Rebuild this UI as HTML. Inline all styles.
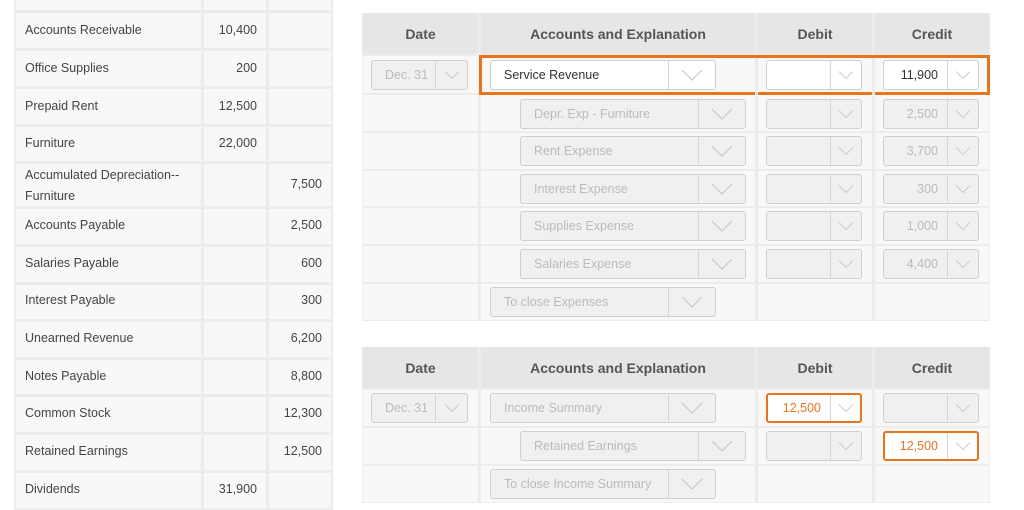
<!DOCTYPE html>
<html><head><meta charset="utf-8"><style>
*{box-sizing:border-box;margin:0;padding:0}
body{width:1024px;height:510px;background:#fff;position:relative;overflow:hidden;font-family:"Liberation Sans",sans-serif;font-size:12.5px;color:#444}
.c{position:absolute;background:#f8f8f8}
.bg{position:absolute;background:#ececec}
.h{position:absolute;background:#e6e6e6;font-size:14px;font-weight:bold;color:#555;display:flex;align-items:center;justify-content:center}
.t{position:absolute;color:#444;line-height:17px}
.n{position:absolute;text-align:right;color:#444;line-height:17px}
.s{position:absolute;height:30px;border:1px solid #cfcfcf;border-radius:3px;background:#f0f0f0;color:#bbb;font-size:12.5px}
.s .v{position:absolute;left:13px;top:7px;white-space:nowrap}
.s .r{position:absolute;right:10px;left:auto;text-align:right}
.s .a{position:absolute;right:0;top:0;bottom:0;border-left:1px solid #d6d6d6}
.s .a svg{position:absolute;left:50%;top:50%;transform:translate(-50%,-50%)}
.w{background:#fff;color:#333}
.o{border:2px solid #e8741e;color:#e8741e;background:#fff}
</style></head><body>
<!-- left table -->
<div class="bg" style="left:14px;top:0;width:319px;height:510px"></div>
<div class="c" style="left:16px;top:0;width:185px;height:10px"></div><div class="c" style="left:204px;top:0;width:62px;height:10px"></div><div class="c" style="left:269px;top:0;width:62px;height:10px"></div>

<div class="c" style="left:16px;top:13px;width:185px;height:35px"></div><div class="c" style="left:204px;top:13px;width:62px;height:35px"></div><div class="c" style="left:269px;top:13px;width:62px;height:35px"></div>
<div class="t" style="left:25px;top:22px">Accounts Receivable</div><div class="n" style="left:204px;top:22px;width:53px">10,400</div>

<div class="c" style="left:16px;top:51px;width:185px;height:35px"></div><div class="c" style="left:204px;top:51px;width:62px;height:35px"></div><div class="c" style="left:269px;top:51px;width:62px;height:35px"></div>
<div class="t" style="left:25px;top:60px">Office Supplies</div><div class="n" style="left:204px;top:60px;width:53px">200</div>

<div class="c" style="left:16px;top:89px;width:185px;height:35px"></div><div class="c" style="left:204px;top:89px;width:62px;height:35px"></div><div class="c" style="left:269px;top:89px;width:62px;height:35px"></div>
<div class="t" style="left:25px;top:98px">Prepaid Rent</div><div class="n" style="left:204px;top:98px;width:53px">12,500</div>

<div class="c" style="left:16px;top:127px;width:185px;height:34px"></div><div class="c" style="left:204px;top:127px;width:62px;height:34px"></div><div class="c" style="left:269px;top:127px;width:62px;height:34px"></div>
<div class="t" style="left:25px;top:135px">Furniture</div><div class="n" style="left:204px;top:135px;width:53px">22,000</div>

<div class="c" style="left:16px;top:164px;width:185px;height:42px"></div><div class="c" style="left:204px;top:164px;width:62px;height:42px"></div><div class="c" style="left:269px;top:164px;width:62px;height:42px"></div>
<div class="t" style="left:25px;top:165px;line-height:21px">Accumulated Depreciation--<br>Furniture</div><div class="n" style="left:269px;top:176px;width:53px">7,500</div>

<div class="c" style="left:16px;top:209px;width:185px;height:35px"></div><div class="c" style="left:204px;top:209px;width:62px;height:35px"></div><div class="c" style="left:269px;top:209px;width:62px;height:35px"></div>
<div class="t" style="left:25px;top:217px">Accounts Payable</div><div class="n" style="left:269px;top:217px;width:53px">2,500</div>

<div class="c" style="left:16px;top:247px;width:185px;height:35px"></div><div class="c" style="left:204px;top:247px;width:62px;height:35px"></div><div class="c" style="left:269px;top:247px;width:62px;height:35px"></div>
<div class="t" style="left:25px;top:255px">Salaries Payable</div><div class="n" style="left:269px;top:255px;width:53px">600</div>

<div class="c" style="left:16px;top:285px;width:185px;height:34px"></div><div class="c" style="left:204px;top:285px;width:62px;height:34px"></div><div class="c" style="left:269px;top:285px;width:62px;height:34px"></div>
<div class="t" style="left:25px;top:292px">Interest Payable</div><div class="n" style="left:269px;top:292px;width:53px">300</div>

<div class="c" style="left:16px;top:322px;width:185px;height:35px"></div><div class="c" style="left:204px;top:322px;width:62px;height:35px"></div><div class="c" style="left:269px;top:322px;width:62px;height:35px"></div>
<div class="t" style="left:25px;top:330px">Unearned Revenue</div><div class="n" style="left:269px;top:330px;width:53px">6,200</div>

<div class="c" style="left:16px;top:360px;width:185px;height:34px"></div><div class="c" style="left:204px;top:360px;width:62px;height:34px"></div><div class="c" style="left:269px;top:360px;width:62px;height:34px"></div>
<div class="t" style="left:25px;top:368px">Notes Payable</div><div class="n" style="left:269px;top:368px;width:53px">8,800</div>

<div class="c" style="left:16px;top:397px;width:185px;height:35px"></div><div class="c" style="left:204px;top:397px;width:62px;height:35px"></div><div class="c" style="left:269px;top:397px;width:62px;height:35px"></div>
<div class="t" style="left:25px;top:405px">Common Stock</div><div class="n" style="left:269px;top:405px;width:53px">12,300</div>

<div class="c" style="left:16px;top:435px;width:185px;height:35px"></div><div class="c" style="left:204px;top:435px;width:62px;height:35px"></div><div class="c" style="left:269px;top:435px;width:62px;height:35px"></div>
<div class="t" style="left:25px;top:443px">Retained Earnings</div><div class="n" style="left:269px;top:443px;width:53px">12,500</div>

<div class="c" style="left:16px;top:473px;width:185px;height:35px"></div><div class="c" style="left:204px;top:473px;width:62px;height:35px"></div><div class="c" style="left:269px;top:473px;width:62px;height:35px"></div>
<div class="t" style="left:25px;top:481px">Dividends</div><div class="n" style="left:204px;top:481px;width:53px">31,900</div>

<!-- table 1 -->
<div class="bg" style="left:362px;top:13px;width:628px;height:308px"></div>
<div class="h" style="left:363px;top:13px;width:115px;height:41px">Date</div>
<div class="h" style="left:481px;top:13px;width:274px;height:41px">Accounts and Explanation</div>
<div class="h" style="left:758px;top:13px;width:114px;height:41px">Debit</div>
<div class="h" style="left:875px;top:13px;width:114px;height:41px">Credit</div>
<div class="c" style="left:363px;top:56px;width:115px;height:37px"></div><div class="c" style="left:481px;top:56px;width:274px;height:37px"></div><div class="c" style="left:758px;top:56px;width:114px;height:37px"></div><div class="c" style="left:875px;top:56px;width:114px;height:37px"></div>
<div class="c" style="left:363px;top:95px;width:115px;height:36px"></div><div class="c" style="left:481px;top:95px;width:274px;height:36px"></div><div class="c" style="left:758px;top:95px;width:114px;height:36px"></div><div class="c" style="left:875px;top:95px;width:114px;height:36px"></div>
<div class="c" style="left:363px;top:133px;width:115px;height:36px"></div><div class="c" style="left:481px;top:133px;width:274px;height:36px"></div><div class="c" style="left:758px;top:133px;width:114px;height:36px"></div><div class="c" style="left:875px;top:133px;width:114px;height:36px"></div>
<div class="c" style="left:363px;top:171px;width:115px;height:35px"></div><div class="c" style="left:481px;top:171px;width:274px;height:35px"></div><div class="c" style="left:758px;top:171px;width:114px;height:35px"></div><div class="c" style="left:875px;top:171px;width:114px;height:35px"></div>
<div class="c" style="left:363px;top:208px;width:115px;height:36px"></div><div class="c" style="left:481px;top:208px;width:274px;height:36px"></div><div class="c" style="left:758px;top:208px;width:114px;height:36px"></div><div class="c" style="left:875px;top:208px;width:114px;height:36px"></div>
<div class="c" style="left:363px;top:246px;width:115px;height:36px"></div><div class="c" style="left:481px;top:246px;width:274px;height:36px"></div><div class="c" style="left:758px;top:246px;width:114px;height:36px"></div><div class="c" style="left:875px;top:246px;width:114px;height:36px"></div>
<div class="c" style="left:363px;top:284px;width:115px;height:36px"></div><div class="c" style="left:481px;top:284px;width:274px;height:36px"></div><div class="c" style="left:758px;top:284px;width:114px;height:36px"></div><div class="c" style="left:875px;top:284px;width:114px;height:36px"></div>

<div style="position:absolute;left:479px;top:55px;width:511px;height:40px;border:3px solid #e8741e;border-bottom:none"></div>
<div style="position:absolute;left:479px;top:92px;width:276px;height:3px;background:#e8741e"></div>
<div style="position:absolute;left:758px;top:92px;width:114px;height:3px;background:#e8741e"></div>
<div style="position:absolute;left:875px;top:92px;width:115px;height:3px;background:#e8741e"></div>

<div class="s" style="left:371px;top:60px;width:97px"><span class="v">Dec. 31</span><span class="a" style="width:32px"><svg width="16" height="9"><polyline points="1,1 8,8 15,1" fill="none" stroke="#ccc" stroke-width="1"/></svg></span></div>
<div class="s w" style="left:490px;top:60px;width:226px"><span class="v">Service Revenue</span><span class="a" style="width:47px"><svg width="22" height="12"><polyline points="1,1 11,11 21,1" fill="none" stroke="#c8c8c8" stroke-width="1.2"/></svg></span></div>
<div class="s w" style="left:766px;top:60px;width:96px"><span class="a" style="width:31px"><svg width="16" height="9"><polyline points="1,1 8,8 15,1" fill="none" stroke="#ccc" stroke-width="1"/></svg></span></div>
<div class="s w" style="left:883px;top:60px;width:96px"><span class="v r" style="right:40px">11,900</span><span class="a" style="width:31px"><svg width="16" height="9"><polyline points="1,1 8,8 15,1" fill="none" stroke="#ccc" stroke-width="1"/></svg></span></div>

<div class="s" style="left:520px;top:99px;width:226px"><span class="v">Depr. Exp - Furniture</span><span class="a" style="width:47px"><svg width="22" height="12"><polyline points="1,1 11,11 21,1" fill="none" stroke="#c8c8c8" stroke-width="1.2"/></svg></span></div>
<div class="s" style="left:766px;top:99px;width:96px"><span class="a" style="width:31px"><svg width="16" height="9"><polyline points="1,1 8,8 15,1" fill="none" stroke="#ccc" stroke-width="1"/></svg></span></div>
<div class="s" style="left:883px;top:99px;width:96px"><span class="v r" style="right:40px">2,500</span><span class="a" style="width:31px"><svg width="16" height="9"><polyline points="1,1 8,8 15,1" fill="none" stroke="#ccc" stroke-width="1"/></svg></span></div>

<div class="s" style="left:520px;top:136px;width:226px"><span class="v">Rent Expense</span><span class="a" style="width:47px"><svg width="22" height="12"><polyline points="1,1 11,11 21,1" fill="none" stroke="#c8c8c8" stroke-width="1.2"/></svg></span></div>
<div class="s" style="left:766px;top:136px;width:96px"><span class="a" style="width:31px"><svg width="16" height="9"><polyline points="1,1 8,8 15,1" fill="none" stroke="#ccc" stroke-width="1"/></svg></span></div>
<div class="s" style="left:883px;top:136px;width:96px"><span class="v r" style="right:40px">3,700</span><span class="a" style="width:31px"><svg width="16" height="9"><polyline points="1,1 8,8 15,1" fill="none" stroke="#ccc" stroke-width="1"/></svg></span></div>

<div class="s" style="left:520px;top:174px;width:226px"><span class="v">Interest Expense</span><span class="a" style="width:47px"><svg width="22" height="12"><polyline points="1,1 11,11 21,1" fill="none" stroke="#c8c8c8" stroke-width="1.2"/></svg></span></div>
<div class="s" style="left:766px;top:174px;width:96px"><span class="a" style="width:31px"><svg width="16" height="9"><polyline points="1,1 8,8 15,1" fill="none" stroke="#ccc" stroke-width="1"/></svg></span></div>
<div class="s" style="left:883px;top:174px;width:96px"><span class="v r" style="right:40px">300</span><span class="a" style="width:31px"><svg width="16" height="9"><polyline points="1,1 8,8 15,1" fill="none" stroke="#ccc" stroke-width="1"/></svg></span></div>

<div class="s" style="left:520px;top:211px;width:226px"><span class="v">Supplies Expense</span><span class="a" style="width:47px"><svg width="22" height="12"><polyline points="1,1 11,11 21,1" fill="none" stroke="#c8c8c8" stroke-width="1.2"/></svg></span></div>
<div class="s" style="left:766px;top:211px;width:96px"><span class="a" style="width:31px"><svg width="16" height="9"><polyline points="1,1 8,8 15,1" fill="none" stroke="#ccc" stroke-width="1"/></svg></span></div>
<div class="s" style="left:883px;top:211px;width:96px"><span class="v r" style="right:40px">1,000</span><span class="a" style="width:31px"><svg width="16" height="9"><polyline points="1,1 8,8 15,1" fill="none" stroke="#ccc" stroke-width="1"/></svg></span></div>

<div class="s" style="left:520px;top:249px;width:226px"><span class="v">Salaries Expense</span><span class="a" style="width:47px"><svg width="22" height="12"><polyline points="1,1 11,11 21,1" fill="none" stroke="#c8c8c8" stroke-width="1.2"/></svg></span></div>
<div class="s" style="left:766px;top:249px;width:96px"><span class="a" style="width:31px"><svg width="16" height="9"><polyline points="1,1 8,8 15,1" fill="none" stroke="#ccc" stroke-width="1"/></svg></span></div>
<div class="s" style="left:883px;top:249px;width:96px"><span class="v r" style="right:40px">4,400</span><span class="a" style="width:31px"><svg width="16" height="9"><polyline points="1,1 8,8 15,1" fill="none" stroke="#ccc" stroke-width="1"/></svg></span></div>

<div class="s" style="left:490px;top:287px;width:226px"><span class="v">To close Expenses</span><span class="a" style="width:47px"><svg width="22" height="12"><polyline points="1,1 11,11 21,1" fill="none" stroke="#c8c8c8" stroke-width="1.2"/></svg></span></div>

<!-- table 2 -->
<div class="bg" style="left:362px;top:347px;width:628px;height:156px"></div>
<div class="h" style="left:363px;top:347px;width:115px;height:41px">Date</div>
<div class="h" style="left:481px;top:347px;width:274px;height:41px">Accounts and Explanation</div>
<div class="h" style="left:758px;top:347px;width:114px;height:41px">Debit</div>
<div class="h" style="left:875px;top:347px;width:114px;height:41px">Credit</div>
<div class="c" style="left:363px;top:390px;width:115px;height:36px"></div><div class="c" style="left:481px;top:390px;width:274px;height:36px"></div><div class="c" style="left:758px;top:390px;width:114px;height:36px"></div><div class="c" style="left:875px;top:390px;width:114px;height:36px"></div>
<div class="c" style="left:363px;top:428px;width:115px;height:36px"></div><div class="c" style="left:481px;top:428px;width:274px;height:36px"></div><div class="c" style="left:758px;top:428px;width:114px;height:36px"></div><div class="c" style="left:875px;top:428px;width:114px;height:36px"></div>
<div class="c" style="left:363px;top:466px;width:115px;height:36px"></div><div class="c" style="left:481px;top:466px;width:274px;height:36px"></div><div class="c" style="left:758px;top:466px;width:114px;height:36px"></div><div class="c" style="left:875px;top:466px;width:114px;height:36px"></div>

<div class="s" style="left:371px;top:393px;width:97px"><span class="v">Dec. 31</span><span class="a" style="width:32px"><svg width="16" height="9"><polyline points="1,1 8,8 15,1" fill="none" stroke="#ccc" stroke-width="1"/></svg></span></div>
<div class="s" style="left:490px;top:393px;width:226px"><span class="v">Income Summary</span><span class="a" style="width:47px"><svg width="22" height="12"><polyline points="1,1 11,11 21,1" fill="none" stroke="#c8c8c8" stroke-width="1.2"/></svg></span></div>
<div class="s o" style="left:766px;top:393px;width:96px"><span class="v r" style="right:39px;top:6px">12,500</span><span class="a" style="width:30px"><svg width="16" height="9"><polyline points="1,1 8,8 15,1" fill="none" stroke="#ccc" stroke-width="1"/></svg></span></div>
<div class="s" style="left:883px;top:393px;width:96px"><span class="a" style="width:31px"><svg width="16" height="9"><polyline points="1,1 8,8 15,1" fill="none" stroke="#ccc" stroke-width="1"/></svg></span></div>

<div class="s" style="left:520px;top:431px;width:226px"><span class="v">Retained Earnings</span><span class="a" style="width:47px"><svg width="22" height="12"><polyline points="1,1 11,11 21,1" fill="none" stroke="#c8c8c8" stroke-width="1.2"/></svg></span></div>
<div class="s" style="left:766px;top:431px;width:96px"><span class="a" style="width:31px"><svg width="16" height="9"><polyline points="1,1 8,8 15,1" fill="none" stroke="#ccc" stroke-width="1"/></svg></span></div>
<div class="s o" style="left:883px;top:431px;width:96px"><span class="v r" style="right:39px;top:6px">12,500</span><span class="a" style="width:30px"><svg width="16" height="9"><polyline points="1,1 8,8 15,1" fill="none" stroke="#ccc" stroke-width="1"/></svg></span></div>

<div class="s" style="left:490px;top:469px;width:226px"><span class="v">To close Income Summary</span><span class="a" style="width:47px"><svg width="22" height="12"><polyline points="1,1 11,11 21,1" fill="none" stroke="#c8c8c8" stroke-width="1.2"/></svg></span></div>
</body></html>
